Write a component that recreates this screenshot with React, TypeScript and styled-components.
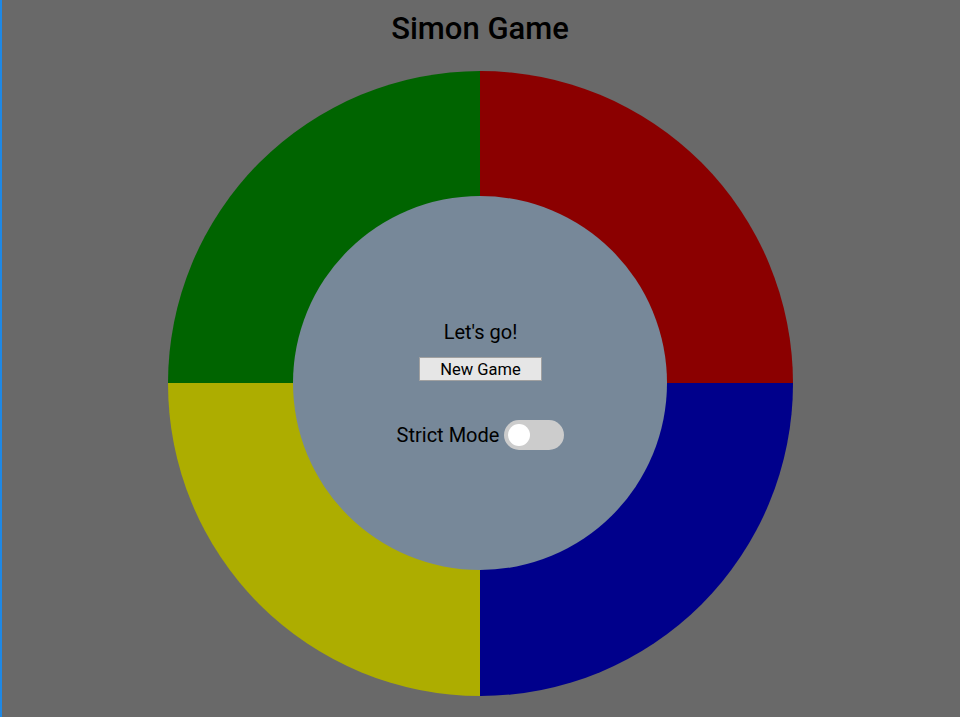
import { useState } from "react";
import styled, { createGlobalStyle } from "styled-components";

const GlobalStyle = createGlobalStyle`
  html, body {
    margin: 0;
    padding: 0;
    height: 100%;
  }

  body {
    background: #696969;
    font-family: Roboto, "Liberation Sans", sans-serif;
    border-left: 2px solid #1e88e5;
    box-sizing: border-box;
  }
`;

const colors = ["#006400", "#8b0000", "#adad00", "#00008b"];

function App() {
  const [strict, setStrict] = useState(false);

  return (
    <Page>
      <GlobalStyle />
      <Title>Simon Game</Title>
      <Board>
        {colors.map((color, i) => (
          <Pad key={i} $color={color} />
        ))}
        <Center>
          <Status>Let's go!</Status>
          <NewGame>New Game</NewGame>
          <StrictRow>
            <span>Strict Mode</span>
            <Switch $on={strict} onClick={() => setStrict(!strict)}>
              <Knob $on={strict} />
            </Switch>
          </StrictRow>
        </Center>
      </Board>
    </Page>
  );
}

export default App;

const Page = styled.div`
  display: flex;
  flex-direction: column;
  align-items: center;
  min-height: 717px;
  margin-left: -2px;
`;

const Title = styled.h1`
  font-size: 31px;
  line-height: 38px;
  font-weight: 500;
  color: #000;
  margin: 0;
  padding-top: 10px;
`;

const Board = styled.div`
  position: relative;
  display: grid;
  grid-template-columns: 312px 313px;
  grid-template-rows: 312px 313px;
  width: 625px;
  height: 625px;
  margin-top: 23px;
  border-radius: 50%;
  overflow: hidden;
`;

const Pad = styled.div<{ $color: string }>`
  background: ${(p) => p.$color};
`;

const Center = styled.div`
  position: absolute;
  top: 125px;
  left: 125px;
  width: 374px;
  height: 374px;
  border-radius: 50%;
  background: #778899;
  display: flex;
  flex-direction: column;
  align-items: center;
  justify-content: center;
  padding: 4px 0 0 2px;
  box-sizing: border-box;
`;

const Status = styled.p`
  font-size: 20px;
  line-height: 24px;
  color: #000;
  margin: 0 0 13px 0;
`;

const NewGame = styled.button`
  width: 123px;
  height: 24px;
  padding: 0;
  font-family: Roboto, "Liberation Sans", sans-serif;
  font-size: 16.5px;
  color: #000;
  background: #e6e6e6;
  border: 1px solid #a0a0a0;
  border-radius: 0;
  margin: 0 0 39px 0;
`;

const StrictRow = styled.div`
  display: flex;
  align-items: center;
  gap: 5px;
  font-size: 20px;
  color: #000;
  height: 30px;
`;

const Switch = styled.div<{ $on: boolean }>`
  position: relative;
  width: 60px;
  height: 30px;
  border-radius: 15px;
  background: ${(p) => (p.$on ? "#2196f3" : "#cccccc")};
  cursor: pointer;
`;

const Knob = styled.div<{ $on: boolean }>`
  position: absolute;
  top: 4px;
  left: ${(p) => (p.$on ? "34px" : "4px")};
  width: 22px;
  height: 22px;
  border-radius: 50%;
  background: #fff;
`;
